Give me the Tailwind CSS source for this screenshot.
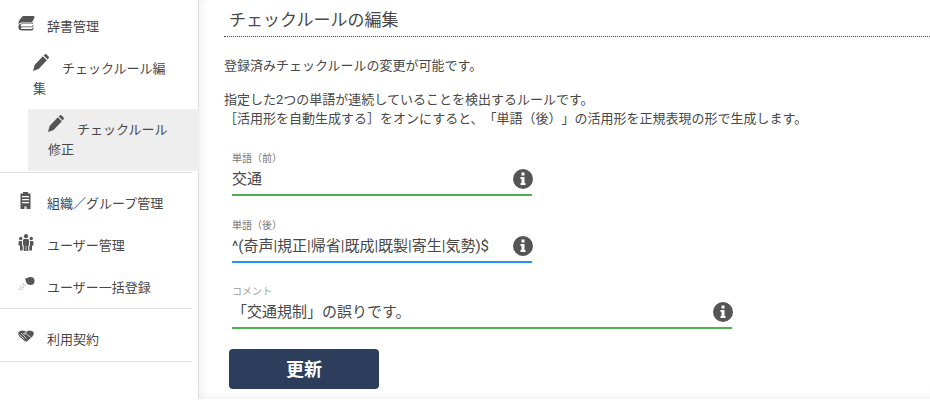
<!DOCTYPE html>
<html lang="ja">
<head>
    <meta charset="UTF-8">
    <title>チェックルールの編集</title>
    <script src="https://cdn.jsdelivr.net/npm/@tailwindcss/browser@4"></script>
</head>
<body class="bg-white text-[#484848] h-[412px] overflow-hidden font-['Roboto','Noto_Sans_CJK_JP',sans-serif] [text-spacing-trim:space-all]">
<div class="flex h-[399px]">
    <!-- サイドメニュー -->
    <aside class="w-[199px] shrink-0 bg-white border-r border-[#e0e0e0] text-[13px]">
        <div class="h-[173px] border-b border-[#e0e0e0] mr-[6px]">
            <div class="flex h-[54px] pl-[18px] pt-[16px]">
                <svg class="w-[17px] h-[15px] mr-[12px]" viewBox="0 0 17 15"><path fill="#555" d="M5.500 0 H15.500 Q17 0 16.500 1.500 L14.500 5.500 Q14 6.500 13 6.500 H3.500 Q1.500 6.500 0.500 8 Q0.200 6 1.500 4 L4 1 Q4.500 0 5.500 0 Z"/><path fill="#555" d="M1 8.500 Q2 7.500 3.500 7.500 H13.500 L15.500 6 L14.500 8 H4 Q2 8.500 2.500 9.800 Q3 10.500 4 10.500 H13.500 L16 8.500 L15 10.500 Q14.500 11.200 14 11.200 H4 Q2.500 11.500 3 12.500 Q3.500 13 4.500 13 H13.500 L16 11 L15 13.500 Q14.500 14.500 13.500 14.500 H4 Q1 14.500 0.500 12 Q0 10 1 8.500 Z"/></svg>
                <span class="leading-[19px] mt-[1px]">辞書管理</span>
            </div>
            <div class="pl-[33px] pr-[17px] h-[55px] leading-[20px]">
                <svg class="inline-block align-[2px] w-[16px] h-[17px] mr-[13px]" viewBox="0 0 16 17"><path fill="#555" d="M12 0.300 Q12.800 -0.200 13.600 0.500 L15.600 2.500 Q16.200 3.300 15.700 4.100 L14.700 5.400 L10.700 1.500 Z M9.800 2.300 L13.900 6.300 L5.600 15 L0 17 L1.600 11 Z"/></svg>チェックルール編集
            </div>
            <div class="ml-[28px] mr-[-7px] h-[62px] bg-[#eeeeee] pl-[20px] pr-[24px] pt-[6px] leading-[20px]">
                <svg class="inline-block align-[2px] w-[16px] h-[17px] mr-[13px]" viewBox="0 0 16 17"><path fill="#555" d="M12 0.300 Q12.800 -0.200 13.600 0.500 L15.600 2.500 Q16.200 3.300 15.700 4.100 L14.700 5.400 L10.700 1.500 Z M9.800 2.300 L13.900 6.300 L5.600 15 L0 17 L1.600 11 Z"/></svg>チェックルール修正
            </div>
        </div>
        <div class="h-[136px] border-b border-[#e0e0e0] mr-[6px] pt-[21px]">
            <div class="flex h-[42px] pl-[20px]">
                <svg class="w-[11px] h-[17px] mr-[16px] mt-[-2px]" viewBox="0 0 11 17"><path fill="#555" fill-rule="evenodd" d="M3 0 H8 V1.500 H10.500 V17 H6.500 V14.500 H4.500 V17 H0.500 V1.500 H3 Z M2 4 V5.200 H9 V4 Z M2 7 V8.200 H9 V7 Z M2 10 V11.200 H9 V10 Z"/></svg>
                <span class="leading-[19px]">組織／グループ管理</span>
            </div>
            <div class="flex h-[42px] pl-[18px]">
                <svg class="w-[16px] h-[17px] mr-[13px] mt-[-2px]" viewBox="0 0 16 17"><g fill="#555"><circle cx="8" cy="2.200" r="2.100"/><circle cx="2.700" cy="4.500" r="1.700"/><circle cx="13.300" cy="4.500" r="1.700"/><path d="M6 5 H10 Q11 5 11 6.500 V11 L10.300 11.500 V17 H8.300 V12 H7.700 V17 H5.700 V11.500 L5 11 V6.500 Q5 5 6 5 Z"/><path d="M1.500 7 H4 V11.500 L4.700 12 V16.500 H2 V12 L0.500 11 V8.500 Q0.500 7 1.500 7 Z"/><path d="M12 7 H14.500 Q15.500 7 15.500 8.500 V11 L14 12 V16.500 H11.300 V12 L12 11.500 Z"/></g></svg>
                <span class="leading-[19px]">ユーザー管理</span>
            </div>
            <div class="flex h-[42px] pl-[18px]">
                <svg class="w-[17px] h-[14px] mr-[12px] mt-[-2px]" viewBox="0 0 17 14"><circle cx="12.500" cy="5" r="4" fill="#555"/><path fill="#555" d="M7 2.500 L12 1.500 L10 8 L8.500 7 Z"/><path fill="#ccc" d="M4 7.500 H6 V9 H4 Z M6.500 8.500 H8 V10 H6.500 Z M2 10 H3.500 V11.500 H2 Z M4.500 10.500 H6 V12 H4.500 Z M0.500 12.500 H2 V14 H0.500 Z M3 12.500 H4.500 V14 H3 Z"/></svg>
                <span class="leading-[19px]">ユーザー一括登録</span>
            </div>
        </div>
        <div class="h-[53px] border-b border-[#e0e0e0] mr-[6px] pt-[20px] flex pl-[18px]">
            <svg class="w-[16px] h-[12px] mr-[13px] mt-[1px]" viewBox="0 0 16 12"><path fill="#555" d="M0.500 2 Q2 0.500 4.500 0.500 L8 1.500 L11.500 0.500 Q14 0.500 15.500 2 Q16.300 4.500 14.500 6.500 L10 10.500 Q8.500 12 6.500 11 L1.500 6.500 Q-0.300 4.500 0.500 2 Z"/><path fill="none" stroke="#fff" stroke-width="0.700" d="M1.500 4.500 L6.500 9.500 M3 3 L8.500 8.500 M9 2 L5.500 3.500 Q6 5 8.500 4 L13 7.500"/></svg>
            <span class="leading-[19px] mt-[1px]">利用契約</span>
        </div>
    </aside>

    <!-- メイン -->
    <main class="flex-1 bg-white text-[13px] shadow-[inset_8px_0_8px_-6px_rgba(0,0,0,0.07),inset_0_-8px_8px_-6px_rgba(0,0,0,0.06)]">
        <h1 class="ml-[25px] h-[37px] border-b border-dotted border-[#424242] pl-[5px] pt-[9px] text-[17px] leading-[22px]">チェックルールの編集</h1>
        <div class="ml-[25px] mt-[19px] leading-[19px]">
            <p>登録済みチェックルールの変更が可能です。</p>
            <p class="mt-[15px]">指定した2つの単語が連続していることを検出するルールです。</p>
            <p>［活用形を自動生成する］をオンにすると、「単語（後）」の活用形を正規表現の形で生成します。</p>
        </div>

        <div class="ml-[33px] mt-[24px] w-[300px]">
            <label class="block text-[10px] leading-[14px] mb-[-2px] text-[#757575]">単語（前）</label>
            <div class="flex items-center justify-between h-[32px] border-b-2 border-[#4caf50] text-[15px]">
                <span>交通</span>
                <svg class="w-[20px] h-[20px] mr-[-1px]" viewBox="0 0 20 20"><circle cx="10" cy="10" r="10" fill="#555"/><path fill="#fff" d="M8.500 3.500 H11.500 V6.500 H8.500 Z M7.500 8 H11.500 V14 H12.500 V16 H7.500 V14 H8.500 V10 H7.500 Z"/></svg>
            </div>
        </div>
        <div class="ml-[33px] mt-[23px] w-[300px]">
            <label class="block text-[10px] leading-[14px] mb-[-2px] text-[#757575]">単語（後）</label>
            <div class="flex items-center justify-between h-[32px] border-b-2 border-[#2196f3] text-[15px]">
                <span>^(奇声|規正|帰省|既成|既製|寄生|気勢)$</span>
                <svg class="w-[20px] h-[20px] mr-[-1px]" viewBox="0 0 20 20"><circle cx="10" cy="10" r="10" fill="#555"/><path fill="#fff" d="M8.500 3.500 H11.500 V6.500 H8.500 Z M7.500 8 H11.500 V14 H12.500 V16 H7.500 V14 H8.500 V10 H7.500 Z"/></svg>
            </div>
        </div>
        <div class="ml-[33px] mt-[22px] w-[500px]">
            <label class="block text-[10px] leading-[14px] mb-[-2px] text-[#9e9e9e]">コメント</label>
            <div class="flex items-center justify-between h-[32px] border-b-2 border-[#4caf50] text-[15px]">
                <span>「交通規制」の誤りです。</span>
                <svg class="w-[20px] h-[20px] mr-[-1px]" viewBox="0 0 20 20"><circle cx="10" cy="10" r="10" fill="#555"/><path fill="#fff" d="M8.500 3.500 H11.500 V6.500 H8.500 Z M7.500 8 H11.500 V14 H12.500 V16 H7.500 V14 H8.500 V10 H7.500 Z"/></svg>
            </div>
        </div>
        <button class="block ml-[30px] mt-[20px] w-[150px] h-[40px] rounded-[4px] bg-[#2c3e5c] text-white text-[18px] font-bold">更新</button>
    </main>
</div>
</body>
</html>
